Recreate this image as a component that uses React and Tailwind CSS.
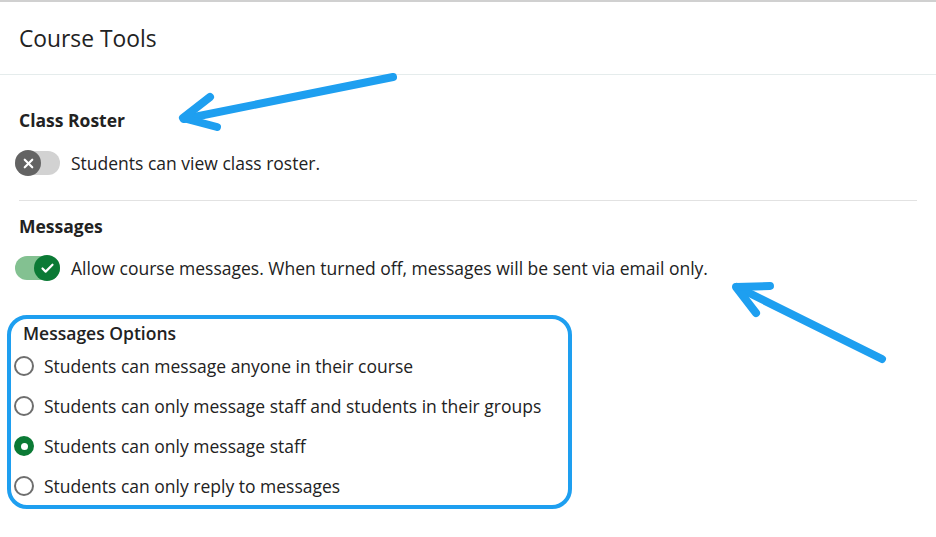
import { Check, X } from 'lucide-react'

const options = [
  { label: 'Students can message anyone in their course', checked: false },
  { label: 'Students can only message staff and students in their groups', checked: false },
  { label: 'Students can only message staff', checked: true },
  { label: 'Students can only reply to messages', checked: false },
]

function Toggle({ on }) {
  return (
    <div className={`relative w-[45px] h-[24px] rounded-full shrink-0 ${on ? 'bg-[#83c191]' : 'bg-[#d2d2d2]'}`}>
      <div
        className={`absolute top-[-1px] w-[26px] h-[26px] rounded-full flex items-center justify-center ${on ? 'right-0 bg-[#0b7a35]' : 'left-0 bg-[#636363]'}`}
      >
        {on ? (
          <Check className="w-[15px] h-[15px] text-white" strokeWidth={3.5} />
        ) : (
          <X className="w-[15px] h-[15px] text-white" strokeWidth={3.5} />
        )}
      </div>
    </div>
  )
}

function Radio({ checked }) {
  if (checked) {
    return (
      <div className="w-[20px] h-[20px] rounded-full bg-[#0b7a35] flex items-center justify-center shrink-0">
        <div className="w-[7px] h-[7px] rounded-full bg-white" />
      </div>
    )
  }
  return <div className="w-[20px] h-[20px] rounded-full border-2 border-[#6e6e6e] bg-white shrink-0" />
}

export default function App() {
  return (
    <div className="relative min-h-screen bg-white border-t-2 border-[#d0d0d0] text-[#222] font-['Open_Sans',sans-serif]">
      {/* Header */}
      <div className="h-[73px] px-[19px] pt-[2px] flex items-center border-b border-[#e5ecec]">
        <h1 className="text-[22.8px] leading-[30px]">Course Tools</h1>
      </div>

      <div className="px-[19px] text-[17.5px]">
        {/* Class roster */}
        <h2 className="mt-[33px] leading-6 font-bold">Class Roster</h2>
        <div className="mt-[19px] -ml-1 flex items-center gap-[11px]">
          <Toggle on={false} />
          <span className="leading-6">Students can view class roster.</span>
        </div>

        <div className="mt-[25px] h-px bg-[#e2e2e2]" />

        {/* Messages */}
        <h2 className="mt-[13px] leading-6 font-bold">Messages</h2>
        <div className="mt-[18px] -ml-1 flex items-center gap-[11px]">
          <Toggle on={true} />
          <span className="leading-6">
            Allow course messages. When turned off, messages will be sent via email only.
          </span>
        </div>

        {/* Options */}
        <div className="mt-[35px] -ml-3 w-[565px] h-[194px] border-4 border-[#1e9ff0] rounded-[20px]">
          <div className="pl-3 pt-[2px] h-[27px] leading-6 font-semibold">Messages Options</div>
          {options.map((o) => (
            <div key={o.label} className="h-10 flex items-center gap-[10px] pl-[3px]">
              <Radio checked={o.checked} />
              <span className="leading-6">{o.label}</span>
            </div>
          ))}
        </div>
      </div>

      {/* Annotation arrows */}
      <svg className="absolute inset-0 pointer-events-none" width="936" height="537" viewBox="0 0 936 537">
        <g stroke="#1e9ff0" strokeWidth="8" strokeLinecap="round" strokeLinejoin="round" fill="none">
          <path d="M393 75 L184 117" />
          <path d="M210 95 L183 116 L217 125" />
          <path d="M882 357 L737 285" />
          <path d="M770 284 L736 285 L756 311" />
        </g>
      </svg>
    </div>
  )
}
